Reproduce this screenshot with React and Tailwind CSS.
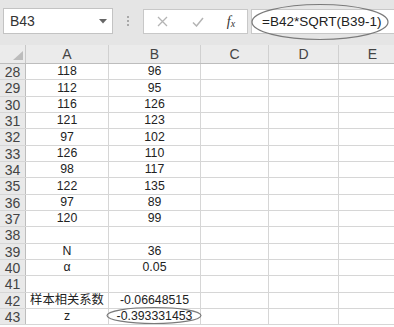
import React from "react";

const cols = [
  { key: "A", w: "w-[83px]" },
  { key: "B", w: "w-[92px]" },
  { key: "C", w: "w-[68px]" },
  { key: "D", w: "w-[70px]" },
  { key: "E", w: "w-[68px]" },
];

const rows = [
  { n: 28, a: "118", b: "96", h: "h-[16px]" },
  { n: 29, a: "112", b: "95", h: "h-[17px]" },
  { n: 30, a: "116", b: "126", h: "h-[16px]" },
  { n: 31, a: "121", b: "123", h: "h-[16px]" },
  { n: 32, a: "97", b: "102", h: "h-[17px]" },
  { n: 33, a: "126", b: "110", h: "h-[16px]" },
  { n: 34, a: "98", b: "117", h: "h-[16px]" },
  { n: 35, a: "122", b: "135", h: "h-[17px]" },
  { n: 36, a: "97", b: "89", h: "h-[16px]" },
  { n: 37, a: "120", b: "99", h: "h-[16px]" },
  { n: 38, a: "", b: "", h: "h-[17px]" },
  { n: 39, a: "N", b: "36", h: "h-[16px]" },
  { n: 40, a: "α", b: "0.05", h: "h-[16px]" },
  { n: 41, a: "", b: "", h: "h-[17px]" },
  { n: 42, a: "样本相关系数", b: "-0.06648515", h: "h-[16px]" },
  { n: 43, a: "z", b: "-0.393331453", h: "h-[16px]" },
];

export default function App() {
  return (
    <div className="relative w-[394px] h-[327px] overflow-hidden bg-white font-['Liberation_Sans','Noto_Sans_CJK_SC',sans-serif]">
      {/* toolbar */}
      <div className="h-[45px] bg-[#e5e5e5] flex items-start pt-[8px] pl-[3px]">
        <div className="w-[110px] h-[26px] bg-white border border-[#c3c3c3] flex items-center justify-between pl-[6px] pr-[5px]">
          <span className="text-[14px] text-[#333] leading-none">B43</span>
          <svg width="8" height="5" viewBox="0 0 8 5"><path d="M0 0h8L4 4.5z" fill="#666" /></svg>
        </div>
        <div className="w-[30px] h-[26px] flex flex-col items-center justify-center gap-[2px]">
          <span className="w-[2px] h-[2px] bg-[#a8a8a8]" />
          <span className="w-[2px] h-[2px] bg-[#a8a8a8]" />
          <span className="w-[2px] h-[2px] bg-[#a8a8a8]" />
        </div>
        <div className="w-[105px] h-[25px] mt-[1px] bg-white border border-[#c8c8c8] flex items-center">
          <div className="w-[36px] flex justify-center">
            <svg width="11" height="11" viewBox="0 0 11 11"><path d="M1 1l9 9M10 1l-9 9" stroke="#b4b4b4" strokeWidth="1.3" /></svg>
          </div>
          <div className="w-[36px] flex justify-center">
            <svg width="12" height="10" viewBox="0 0 12 10"><path d="M1 5.5l3.5 3.5L11 1" stroke="#b4b4b4" strokeWidth="1.5" fill="none" /></svg>
          </div>
          <div className="w-[30px] flex justify-center items-end font-['Liberation_Serif',serif] italic text-[#333] leading-none">
            <span className="text-[14px]">f</span>
            <span className="text-[10px]">x</span>
          </div>
        </div>
        <div className="flex-1 h-[25px] mt-[1px] ml-[3px] bg-white border border-[#c8c8c8] border-r-0 flex items-center pl-[10px]">
          <span className="text-[13.5px] text-[#222] leading-none whitespace-nowrap">=B42*SQRT(B39-1)</span>
        </div>
      </div>

      {/* column headers */}
      <div className="flex h-[19px] bg-[#ebebeb] border-b border-[#bdbdbd]">
        <div className="w-[26px] shrink-0 border-r border-[#c8c8c8] relative">
          <svg className="absolute left-[13px] top-[6px]" width="10" height="9" viewBox="0 0 10 9"><path d="M10 0v9H0z" fill="#bcbcbc" /></svg>
        </div>
        {cols.map((c) => (
          <div key={c.key} className={`${c.w} shrink-0 border-r border-[#d0d0d0] flex items-center justify-center text-[14px] text-[#444] leading-none`}>
            {c.key}
          </div>
        ))}
      </div>

      {/* rows */}
      {rows.map((r) => (
        <div key={r.n} className={`flex ${r.h} border-b border-[#d6d6d6]`}>
          <div className="w-[26px] shrink-0 bg-[#e9e9e9] border-r border-[#bdbdbd] flex items-center justify-center text-[14px] text-[#444] leading-none">
            {r.n}
          </div>
          <div className="w-[83px] shrink-0 border-r border-[#d6d6d6] flex items-center justify-center text-[12.3px] text-[#222] leading-none whitespace-nowrap">
            {r.a}
          </div>
          <div className="w-[92px] shrink-0 border-r border-[#d6d6d6] flex items-center justify-center text-[12.3px] text-[#222] leading-none whitespace-nowrap">
            {r.b}
          </div>
          <div className="w-[68px] shrink-0 border-r border-[#d6d6d6]" />
          <div className="w-[70px] shrink-0 border-r border-[#d6d6d6]" />
          <div className="w-[68px] shrink-0 border-r border-[#d6d6d6]" />
        </div>
      ))}

      {/* hand-drawn ellipses */}
      <svg className="absolute left-[250px] top-[2px] pointer-events-none" width="142" height="40" viewBox="0 0 142 40">
        <ellipse cx="70" cy="20" rx="68" ry="17.5" fill="none" stroke="#7a7a7a" strokeWidth="1.2" />
      </svg>
      <svg className="absolute left-[105px] top-[306px] pointer-events-none" width="98" height="19" viewBox="0 0 98 19">
        <ellipse cx="49" cy="9.5" rx="47" ry="8" fill="none" stroke="#7a7a7a" strokeWidth="1.2" />
      </svg>
    </div>
  );
}
